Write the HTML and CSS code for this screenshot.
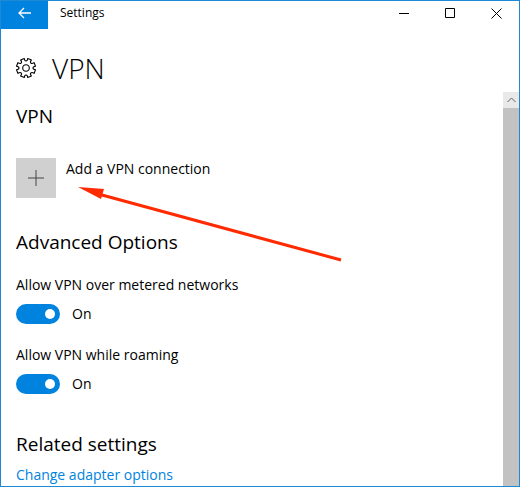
FILE: index.html
```html
<!DOCTYPE html>
<html lang="en">
    <head>
        <meta charset="utf-8">
        <title>Settings</title>
        <meta name="viewport" content="width=device-width, initial-scale=1.0">
        <link rel="stylesheet" href="styles.css">
    </head>
    <body>
        <div class="window">
            <div class="titlebar">
                <button class="back" type="button" aria-label="Back">
                    <svg width="14" height="12" viewBox="0 0 14 12"><path d="M13 6H1M6 1L1 6l5 5"/></svg>
                </button>
                <span class="title">Settings</span>
                <button class="control" type="button" aria-label="Minimize">
                    <svg width="11" height="11" viewBox="0 0 11 11"><path d="M0 5.5h10"/></svg>
                </button>
                <button class="control" type="button" aria-label="Maximize">
                    <svg width="11" height="11" viewBox="0 0 11 11"><path d="M.5.5h9v9h-9z"/></svg>
                </button>
                <button class="control" type="button" aria-label="Close">
                    <svg width="11" height="11" viewBox="0 0 11 11"><path d="M.5.5l10 10M10.5.5l-10 10"/></svg>
                </button>
            </div>
            <header class="header">
                <svg class="gear" width="22" height="22" viewBox="-11 -11 22 22">
                    <path d="M9.500 1.700C6.200 1.400 6.200 -1.400 9.500 -1.700L8.100 -5.400C5.300 -3.300 3.300 -5.300 5.400 -8.100L1.700 -9.500C1.400 -6.200 -1.400 -6.200 -1.700 -9.500L-5.400 -8.100C-3.300 -5.300 -5.300 -3.300 -8.100 -5.400L-9.500 -1.700C-6.200 -1.400 -6.200 1.400 -9.500 1.700L-8.100 5.400C-5.300 3.300 -3.300 5.300 -5.400 8.100L-1.700 9.500C-1.400 6.200 1.400 6.200 1.700 9.500L5.400 8.100C3.300 5.300 5.300 3.300 8.100 5.400Z"/>
                    <circle r="3.300"/>
                </svg>
                <h1>VPN</h1>
            </header>
            <div class="body">
                <main class="content">
                    <h2>VPN</h2>
                    <button class="add" type="button">
                        <span class="plus">
                            <svg width="16" height="16" viewBox="0 0 16 16"><path d="M0 8h16M8 0v16"/></svg>
                        </span>
                        <span class="add-text">Add a VPN connection</span>
                    </button>
                    <h2>Advanced Options</h2>
                    <div class="option">
                        <label for="metered">Allow VPN over metered networks</label>
                        <div class="row">
                            <input class="toggle" id="metered" type="checkbox" role="switch" checked>
                            <span>On</span>
                        </div>
                    </div>
                    <div class="option">
                        <label for="roaming">Allow VPN while roaming</label>
                        <div class="row">
                            <input class="toggle" id="roaming" type="checkbox" role="switch" checked>
                            <span>On</span>
                        </div>
                    </div>
                    <h2 class="related">Related settings</h2>
                    <a href="#">Change adapter options</a>
                </main>
                <div class="scrollbar">
                    <button class="scroll-up" type="button" aria-label="Scroll up">
                        <svg width="9" height="6" viewBox="0 0 9 6"><path d="M.5 5l4-4 4 4"/></svg>
                    </button>
                    <div class="thumb"></div>
                </div>
            </div>
            <svg class="arrow" width="264" height="76" viewBox="0 0 264 76">
                <path class="line" d="M24 8L263 73"/>
                <path class="head" d="M0 0L26 2L23 12Z"/>
            </svg>
        </div>
    </body>
</html>
```
FILE: styles.css
```css
* {
    box-sizing: border-box;
    margin: 0;
    padding: 0;
}
body {
    font-family: "Open Sans", "Noto Sans", sans-serif;
    font-size: 14px;
    line-height: 20px;
    color: #000;
    background: #fff;
}
button {
    border: 0;
    background: none;
    font: inherit;
    color: inherit;
}
svg {
    display: block;
    fill: none;
    stroke: #000;
}
.window {
    position: relative;
    display: flex;
    flex-direction: column;
    height: 100vh;
    border: 1px solid #1e8ad6;
    overflow: hidden;
}
.titlebar {
    display: flex;
    flex: none;
    height: 28px;
}
.back {
    display: flex;
    align-items: center;
    justify-content: center;
    width: 47px;
    padding-bottom: 4px;
    background: #0083de;
}
.back svg {
    stroke: #fff;
    stroke-width: 1.3;
}
.title {
    flex: 1;
    padding-left: 12px;
    font-size: 12px;
    line-height: 24px;
}
.control {
    display: flex;
    align-items: center;
    justify-content: center;
    width: 46px;
    padding-bottom: 3px;
}
.header {
    display: flex;
    flex: none;
    align-items: center;
    gap: 15px;
    height: 63px;
    padding: 14px 14px 0;
}
.gear {
    stroke-width: 1.1;
    stroke-linejoin: round;
}
h1 {
    font-size: 28px;
    font-weight: 300;
    line-height: 36px;
}
.body {
    display: flex;
    flex: 1;
    min-height: 0;
}
.content {
    flex: 1;
    padding: 11px 15px 0;
}
h2 {
    font-size: 19px;
    font-weight: 400;
    line-height: 26px;
}
.add {
    display: flex;
    gap: 10px;
    margin: 29px 0 31px;
    text-align: left;
}
.add-text {
    line-height: 22px;
}
.plus {
    display: flex;
    align-items: center;
    justify-content: center;
    width: 40px;
    height: 40px;
    background: #d0d0d0;
}
.plus svg {
    stroke: #444;
}
.option {
    margin: 20px 0 21px;
}
.row {
    display: flex;
    align-items: center;
    gap: 12px;
    margin-top: 9px;
}
.toggle {
    display: flex;
    align-items: center;
    justify-content: flex-end;
    width: 44px;
    height: 20px;
    padding-right: 5px;
    border-radius: 10px;
    background: #0083de;
    appearance: none;
}
.toggle::before {
    content: "";
    width: 10px;
    height: 10px;
    border-radius: 50%;
    background: #fff;
}
.toggle:not(:checked) {
    justify-content: flex-start;
    padding-left: 5px;
    background: #999;
}
.related {
    margin: 37px 0 8px;
}
a {
    color: #0083de;
    text-decoration: none;
}
.scrollbar {
    display: flex;
    flex-direction: column;
    width: 16px;
    background: #e9e9e9;
}
.scroll-up {
    display: flex;
    align-items: center;
    justify-content: center;
    height: 16px;
}
.scroll-up svg {
    stroke: #606060;
}
.thumb {
    flex: 1;
    background: #c2c2c2;
}
/* callout drawn over the page */
.arrow {
    position: absolute;
    top: 186px;
    left: 77px;
    pointer-events: none;
}
.arrow .line {
    stroke: #ff2a00;
    stroke-width: 3;
}
.arrow .head {
    fill: #ff2a00;
    stroke: none;
}
```
